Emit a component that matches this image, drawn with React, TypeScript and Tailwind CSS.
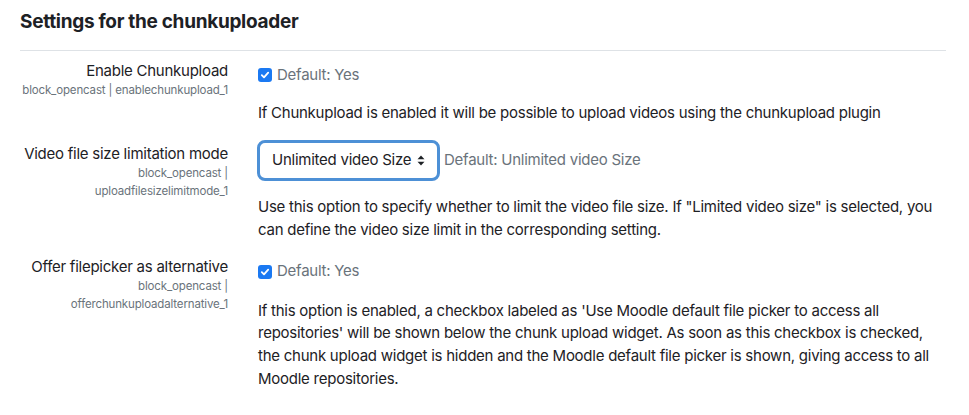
import React from "react";

function Check() {
  return (
    <span className="inline-flex h-[14px] w-[14px] items-center justify-center rounded-[3px] bg-[#1b79f2]">
      <svg width="10" height="10" viewBox="0 0 10 10" fill="none">
        <path d="M1.8 5.2 L4 7.4 L8.2 2.6" stroke="white" strokeWidth="1.8" strokeLinecap="round" strokeLinejoin="round" />
      </svg>
    </span>
  );
}

function Label({ title, sub }: { title: string; sub: React.ReactNode }) {
  return (
    <div className="w-[208px] shrink-0 text-right">
      <div className="whitespace-nowrap text-[15px] leading-[20px] tracking-[-0.25px] text-[#1d2125]">{title}</div>
      <div className="whitespace-nowrap text-[11.5px] leading-[18px] tracking-[-0.15px] text-[#6a737b]">{sub}</div>
    </div>
  );
}

export default function App() {
  return (
    <div
      className="min-h-[415px] w-[969px] bg-white text-[#1d2125] tracking-[-0.25px]"
      style={{ fontFamily: "Inter, 'Noto Sans', sans-serif" }}
    >
      <div className="pl-[20px] pr-[23px] pt-[10px]">
        <h3 className="text-[19px] font-bold leading-[24px] tracking-[-0.3px] text-[#1d2125]">Settings for the chunkuploader</h3>
        <div className="mt-[16px] h-px bg-[#dee2e6]" />

        {/* Row 1 */}
        <div className="mt-[10px] flex gap-[30px]">
          <Label title="Enable Chunkupload" sub="block_opencast | enablechunkupload_1" />
          <div className="flex-1">
            <div className="mt-[3px] flex h-[22px] items-center gap-[5px]">
              <Check />
              <span className="text-[15px] text-[#6a737b]">Default: Yes</span>
            </div>
            <p className="mt-[16px] text-[15px] leading-[22.5px]">
              If Chunkupload is enabled it will be possible to upload videos using the chunkupload plugin
            </p>
          </div>
        </div>

        {/* Row 2 */}
        <div className="mt-[15px] flex gap-[30px]">
          <div className="pt-[4px]">
            <Label
              title="Video file size limitation mode"
              sub={
                <>
                  block_opencast |<br />
                  uploadfilesizelimitmode_1
                </>
              }
            />
          </div>
          <div className="flex-1">
            <div className="-ml-[1px] flex items-center gap-[4px]">
              <div className="flex h-[41px] w-[183px] items-center justify-between rounded-[8px] border-[3px] border-[#4d90d6] bg-white pl-[12px] pr-[12px]">
                <span className="text-[15px] text-[#1d2125]">Unlimited video Size</span>
                <svg width="8" height="11" viewBox="0 0 8 11">
                  <path d="M4 0.5 L7.5 4.2 L0.5 4.2 Z" fill="#1d2125" />
                  <path d="M4 10.5 L7.5 6.8 L0.5 6.8 Z" fill="#1d2125" />
                </svg>
              </div>
              <span className="text-[15px] text-[#6a737b]">Default: Unlimited video Size</span>
            </div>
            <p className="mt-[14px] text-[15px] leading-[23px]">
              Use this option to specify whether to limit the video file size. If "Limited video size" is selected, you can define the video size limit in the corresponding setting.
            </p>
          </div>
        </div>

        {/* Row 3 */}
        <div className="mt-[16px] flex gap-[30px]">
          <Label
            title="Offer filepicker as alternative"
            sub={
              <>
                block_opencast |<br />
                offerchunkuploadalternative_1
              </>
            }
          />
          <div className="flex-1">
            <div className="mt-[4px] flex h-[22px] items-center gap-[5px]">
              <Check />
              <span className="text-[15px] text-[#6a737b]">Default: Yes</span>
            </div>
            <p className="mt-[17px] text-[15px] leading-[22.7px]">
              If this option is enabled, a checkbox labeled as 'Use Moodle default file picker to access all repositories' will be shown below the chunk upload widget. As soon as this checkbox is checked, the chunk upload widget is hidden and the Moodle default file picker is shown, giving access to all Moodle repositories.
            </p>
          </div>
        </div>
      </div>
    </div>
  );
}
